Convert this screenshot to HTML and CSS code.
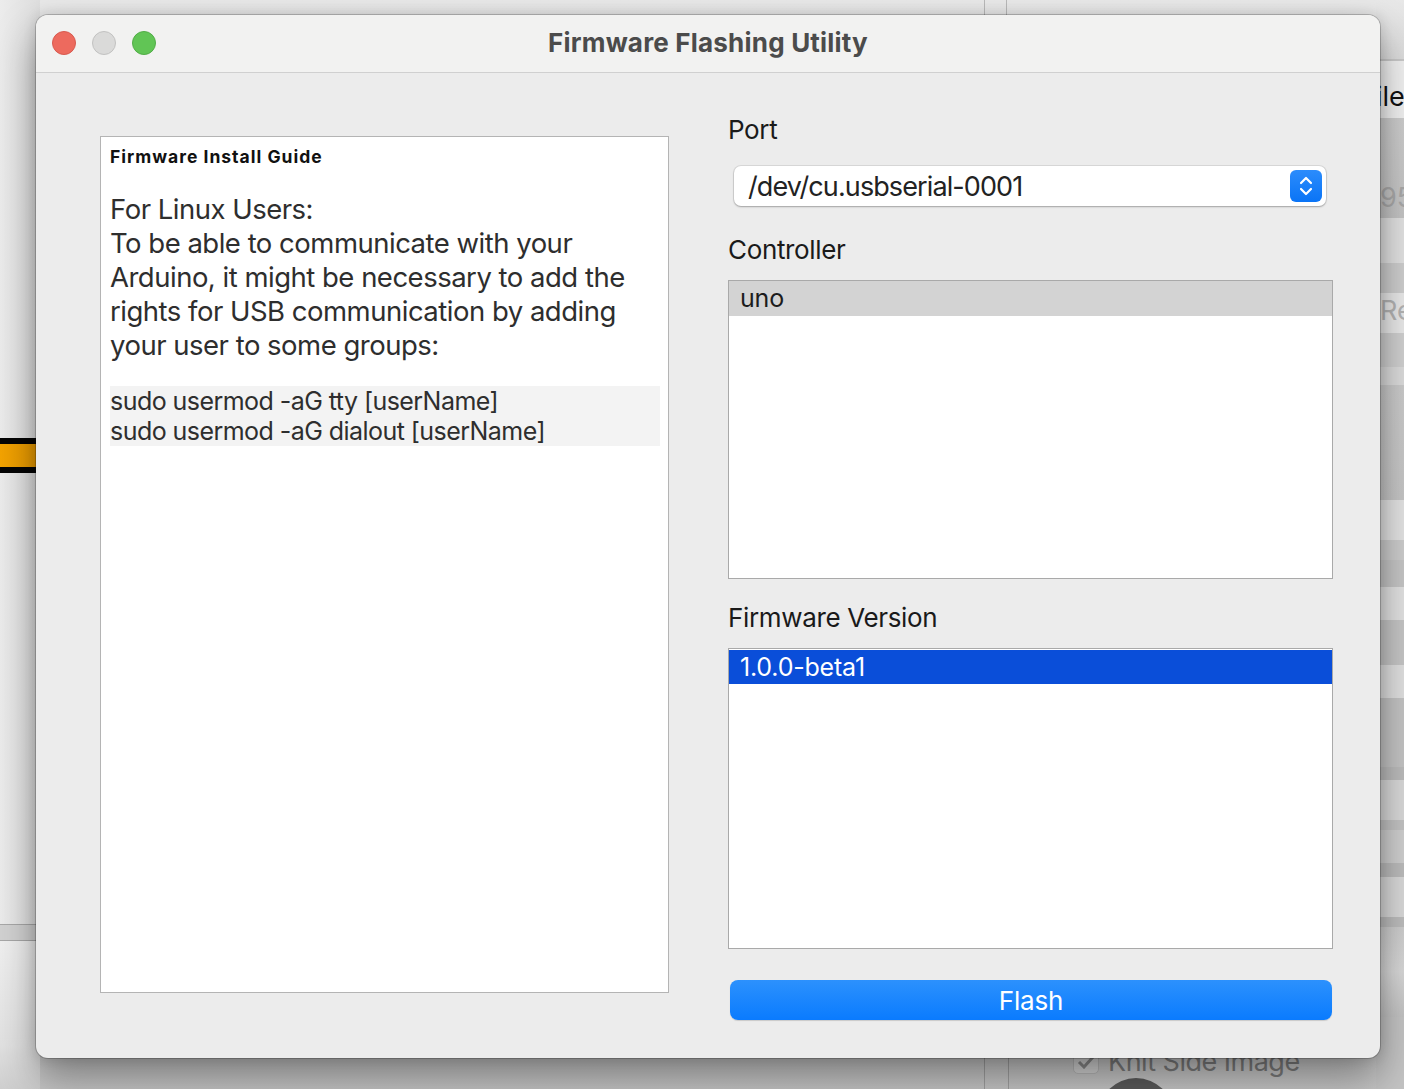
FILE: index.html
```html
<!DOCTYPE html>
<html lang="en">
<head>
<meta charset="utf-8">
<title>Firmware Flashing Utility</title>
<link rel="stylesheet" href="styles.css">
</head>
<body>
<div class="desktop">
  <div class="bg-left">
    <div class="bg-left-top"></div>
    <div class="orange-bar"></div>
    <div class="bg-left-mid"></div>
    <div class="bg-left-band"></div>
    <div class="bg-left-bottom"></div>
  </div>
  <div class="bg-topdiv"></div>
  <div class="bg-bottom">
    <span class="bg-check"><svg width="18" height="14" viewBox="0 0 18 14"><path d="M2 7 L7 12 L16 2" fill="none" stroke="#8a8a8a" stroke-width="3"/></svg></span>
    <span class="bg-knit">Knit Side Image</span>
    <span class="bg-circle"></span>
  </div>
  <div class="bg-right">
    <div class="r r1"></div>
    <div class="r r2"><span>ile</span></div>
    <div class="r r3"><span>95</span></div>
    <div class="r r4"></div>
    <div class="r r5"></div>
    <div class="r r6"><span>Re</span></div>
    <div class="r r7"></div>
    <div class="r r8"></div>
    <div class="r r9"></div>
    <div class="r r10"></div>
    <div class="r r11"></div>
    <div class="r r12"></div>
    <div class="r r13"></div>
    <div class="r r14"></div>
    <div class="r r15"></div>
    <div class="r r16"></div>
    <div class="r r17"></div>
    <div class="r r18"></div>
    <div class="r r19"></div>
    <div class="r r20"></div>
    <div class="r r21"></div>
    <div class="r r22"></div>
    <div class="r r23"></div>
    <div class="r r24"></div>
  </div>
</div>

<div class="window">
  <div class="titlebar">
    <div class="lights">
      <span class="light red"></span>
      <span class="light grey"></span>
      <span class="light green"></span>
    </div>
    <div class="title">Firmware Flashing Utility</div>
  </div>
  <div class="content">
    <div class="guide">
      <div class="guide-title">Firmware Install Guide</div>
      <p class="guide-text">For Linux Users:<br>To be able to communicate with your Arduino, it might be necessary to add the rights for USB communication by adding your user to some groups:</p>
      <pre class="guide-code">sudo usermod -aG tty [userName]
sudo usermod -aG dialout [userName]</pre>
    </div>
    <div class="controls">
      <div class="label label-port">Port</div>
      <div class="select">
        <span class="select-value">/dev/cu.usbserial-0001</span>
        <span class="stepper"><svg width="18" height="24" viewBox="0 0 18 24"><path d="M4 9 L9 4 L14 9" fill="none" stroke="#fff" stroke-width="2.2" stroke-linecap="round" stroke-linejoin="round"/><path d="M4 15 L9 20 L14 15" fill="none" stroke="#fff" stroke-width="2.2" stroke-linecap="round" stroke-linejoin="round"/></svg></span>
      </div>
      <div class="label label-ctrl">Controller</div>
      <div class="list list-ctrl">
        <div class="row row-grey">uno</div>
      </div>
      <div class="label label-fw">Firmware Version</div>
      <div class="list list-fw">
        <div class="row row-blue">1.0.0-beta1</div>
      </div>
      <button class="flash">Flash</button>
    </div>
  </div>
</div>
</body>
</html>
```
FILE: styles.css
```css
* { box-sizing: border-box; }
html, body { margin: 0; padding: 0; }
body {
  width: 1404px;
  height: 1089px;
  overflow: hidden;
  position: relative;
  background: linear-gradient(180deg, #e8e8e8 0%, #dcdcdc 70%, #c6c6c6 100%);
  font-family: Inter, "Liberation Sans", sans-serif;
}

/* ---------- backdrop (other app on the desktop) ---------- */
.desktop { position: absolute; inset: 0; overflow: hidden; }
.bg-left {
  position: absolute; left: 0; top: 0; width: 40px; height: 1089px;
  display: flex; flex-direction: column;
  background: linear-gradient(90deg, #ececec, #dedede);
}
.bg-left-top { height: 438px; }
.orange-bar {
  height: 35px;
  border-top: 6px solid #050505;
  border-bottom: 6px solid #050505;
  background: linear-gradient(90deg, #f4a300, #e89a00);
}
.bg-left-mid { height: 451px; }
.bg-left-band { height: 17px; border-top: 1px solid #a8a8a8; border-bottom: 1px solid #a8a8a8; background: #d2d2d2; }
.bg-left-bottom { flex: 1; background: linear-gradient(180deg, #f0f0f0, #e2e2e2 70%, #cfcfcf); }

.bg-topdiv {
  position: absolute; left: 984px; top: 0; width: 23px; height: 16px;
  border-left: 1px solid #b8b8b8; border-right: 1px solid #b8b8b8;
}
.bg-bottom {
  position: absolute; left: 0; top: 1040px; width: 1404px; height: 49px;
  overflow: hidden;
}
.bg-bottom::before {
  content: ""; position: absolute; left: 984px; top: 0; width: 23px; height: 49px;
  border-left: 1px solid #a0a0a0; border-right: 1px solid #a0a0a0;
}
.bg-check {
  position: absolute; left: 1073px; top: 9px; width: 26px; height: 25px;
  border: 1px solid #b8b8b8; border-radius: 5px; background: #d4d4d4;
  display: flex; align-items: center; justify-content: center;
}
.bg-knit {
  position: absolute; left: 1108px; top: 4px;
  font-size: 27px; color: #7c7c7c; line-height: 36px;
  letter-spacing: -0.5px;
}
.bg-circle {
  position: absolute; left: 1098px; top: 38px; width: 76px; height: 76px;
  border-radius: 50%; background: #5a5a5a;
}

.bg-right {
  position: absolute; left: 1376px; top: 0; width: 28px; height: 1089px;
  display: flex; flex-direction: column;
  background: #c4c4c4;
  overflow: hidden;
}
.r { flex: none; position: relative; overflow: hidden; }
.r span { position: absolute; left: 4px; font-size: 27px; line-height: 32px; white-space: nowrap; }
.r1 { height: 60px; background: linear-gradient(#e8e8e8, #dcdcdc); border-bottom: 1px solid #c8c8c8; }
.r2 { height: 58px; background: #f1f1f1; border-top: 1px solid #c9c9c9; }
.r2 span { top: 20px; color: #111; left: 0; }
.r3 { height: 100px; background: linear-gradient(#cdcdcd, #c4c4c4); }
.r3 span { top: 64px; color: #a9a9a9; }
.r4 { height: 45px; background: #e2e2e2; }
.r5 { height: 30px; background: #cecece; }
.r6 { height: 40px; background: #e9e9e9; }
.r6 span { top: 2px; color: #b4b4b4; }
.r7 { height: 34px; background: #d0d0d0; }
.r8 { height: 18px; background: #dcdcdc; }
.r9 { height: 115px; background: linear-gradient(#cbcbcb, #c6c6c6); }
.r10 { height: 40px; background: #e3e3e3; }
.r11 { height: 20px; background: #cdcdcd; }
.r12 { height: 27px; background: #c6c6c6; }
.r13 { height: 33px; background: #e2e2e2; }
.r14 { height: 45px; background: #c6c6c6; }
.r15 { height: 33px; background: #e0e0e0; }
.r16 { height: 69px; background: #c4c4c4; }
.r17 { height: 13px; background: #bcbcbc; }
.r18 { height: 40px; background: #d9d9d9; }
.r19 { height: 10px; background: #c3c3c3; }
.r20 { height: 33px; background: #cfcfcf; }
.r21 { height: 14px; background: #bcbcbc; }
.r22 { height: 40px; background: #d9d9d9; }
.r23 { height: 10px; background: #bdbdbd; }
.r24 { height: 90px; background: linear-gradient(#cdcdcd, #d8d8d8 50%, #c2c2c2); }

/* ---------- dialog window ---------- */
.window {
  position: absolute;
  left: 36px; top: 15px;
  width: 1344px; height: 1043px;
  border-radius: 12px;
  background: #ececec;
  box-shadow: 0 0 0 1px rgba(0,0,0,0.2), 0 20px 40px rgba(0,0,0,0.38), 0 0 14px rgba(0,0,0,0.14);
  overflow: hidden;
  display: flex; flex-direction: column;
}
.titlebar {
  height: 58px;
  flex: none;
  background: #f2f2f1;
  border-bottom: 1px solid #d0d0d0;
  position: relative;
  display: flex; align-items: center; justify-content: center;
}
.lights {
  position: absolute; left: 16px; top: 16px;
  display: flex; gap: 16px;
}
.light {
  width: 24px; height: 24px; border-radius: 50%;
  display: block;
}
.light.red { background: #ed6a5e; border: 1px solid #d85a4f; }
.light.grey { background: #dadad9; border: 1px solid #c2c2c1; }
.light.green { background: #61c555; border: 1px solid #52ad47; }
.title {
  font-family: Inter, "Liberation Sans", sans-serif;
  font-weight: 700;
  font-size: 26px;
  color: #4b4b4b;
  letter-spacing: 0.2px;
  margin-top: -3px;
}

.content {
  flex: 1;
  display: flex;
  align-items: flex-start;
  padding: 0 47px 0 64px;
  gap: 59px;
}

/* left guide panel */
.guide {
  margin-top: 63px;
  width: 569px;
  height: 857px;
  flex: none;
  background: #fff;
  border: 1px solid #b4b4b4;
  padding: 9px 8px 0 9px;
}
.guide-title {
  font-weight: 700;
  font-size: 17.5px;
  line-height: 22px;
  color: #111;
  letter-spacing: 1px;
}
.guide-text {
  margin: 24px 0 0;
  font-size: 27.5px;
  line-height: 34px;
  color: #2e2e2e;
  letter-spacing: -0.5px;
}
.guide-code {
  margin: 24px 0 0;
  background: #f3f3f3;
  font-family: Inter, "Liberation Sans", sans-serif;
  font-size: 25px;
  line-height: 30px;
  color: #2e2e2e;
  white-space: pre;
  letter-spacing: -0.55px;
}

/* right controls column */
.controls {
  flex: 1;
  padding-top: 42px;
  display: flex; flex-direction: column;
}
.label {
  font-size: 26px;
  line-height: 30px;
  color: #1a1a1a;
  letter-spacing: -0.35px;
}
.select {
  margin: 21px 7px 0 6px;
  height: 40px;
  background: #fff;
  border-radius: 7px;
  box-shadow: 0 0 0 1px rgba(0,0,0,0.08), 0 1px 2px rgba(0,0,0,0.25);
  display: flex; align-items: center; justify-content: space-between;
  padding: 0 4px 0 14px;
}
.select-value {
  font-size: 27px;
  color: #222;
  letter-spacing: -0.9px;
}
.stepper {
  width: 32px; height: 32px;
  border-radius: 6px;
  background: linear-gradient(#2b8cfc, #0a74f6);
  display: flex; align-items: center; justify-content: center;
}
.label-ctrl { margin-top: 29px; }
.label-fw { margin-top: 24px; }
.list {
  margin-top: 15px;
  background: #fff;
  border: 1px solid #a9a9a9;
  padding-top: 1px;
}
.list-ctrl { height: 299px; padding-top: 0; }
.list-fw { height: 301px; }
.row {
  height: 35px;
  padding-left: 11px;
  font-size: 25px;
  line-height: 35px;
  letter-spacing: -0.2px;
}
.row-grey { background: #d3d3d3; color: #1c1c1c; }
.row-blue { background: #0a4ed9; color: #fff; height: 34px; line-height: 34px; }
.flash {
  margin: 31px 1px 0 2px;
  height: 40px;
  border: none;
  border-radius: 8px;
  background: linear-gradient(#2c91fd, #0a7bfe);
  box-shadow: 0 1px 1px rgba(0,0,0,0.15);
  color: #fff;
  font-family: Inter, "Liberation Sans", sans-serif;
  font-size: 26px;
  letter-spacing: -0.2px;
  padding: 0;
}
```
